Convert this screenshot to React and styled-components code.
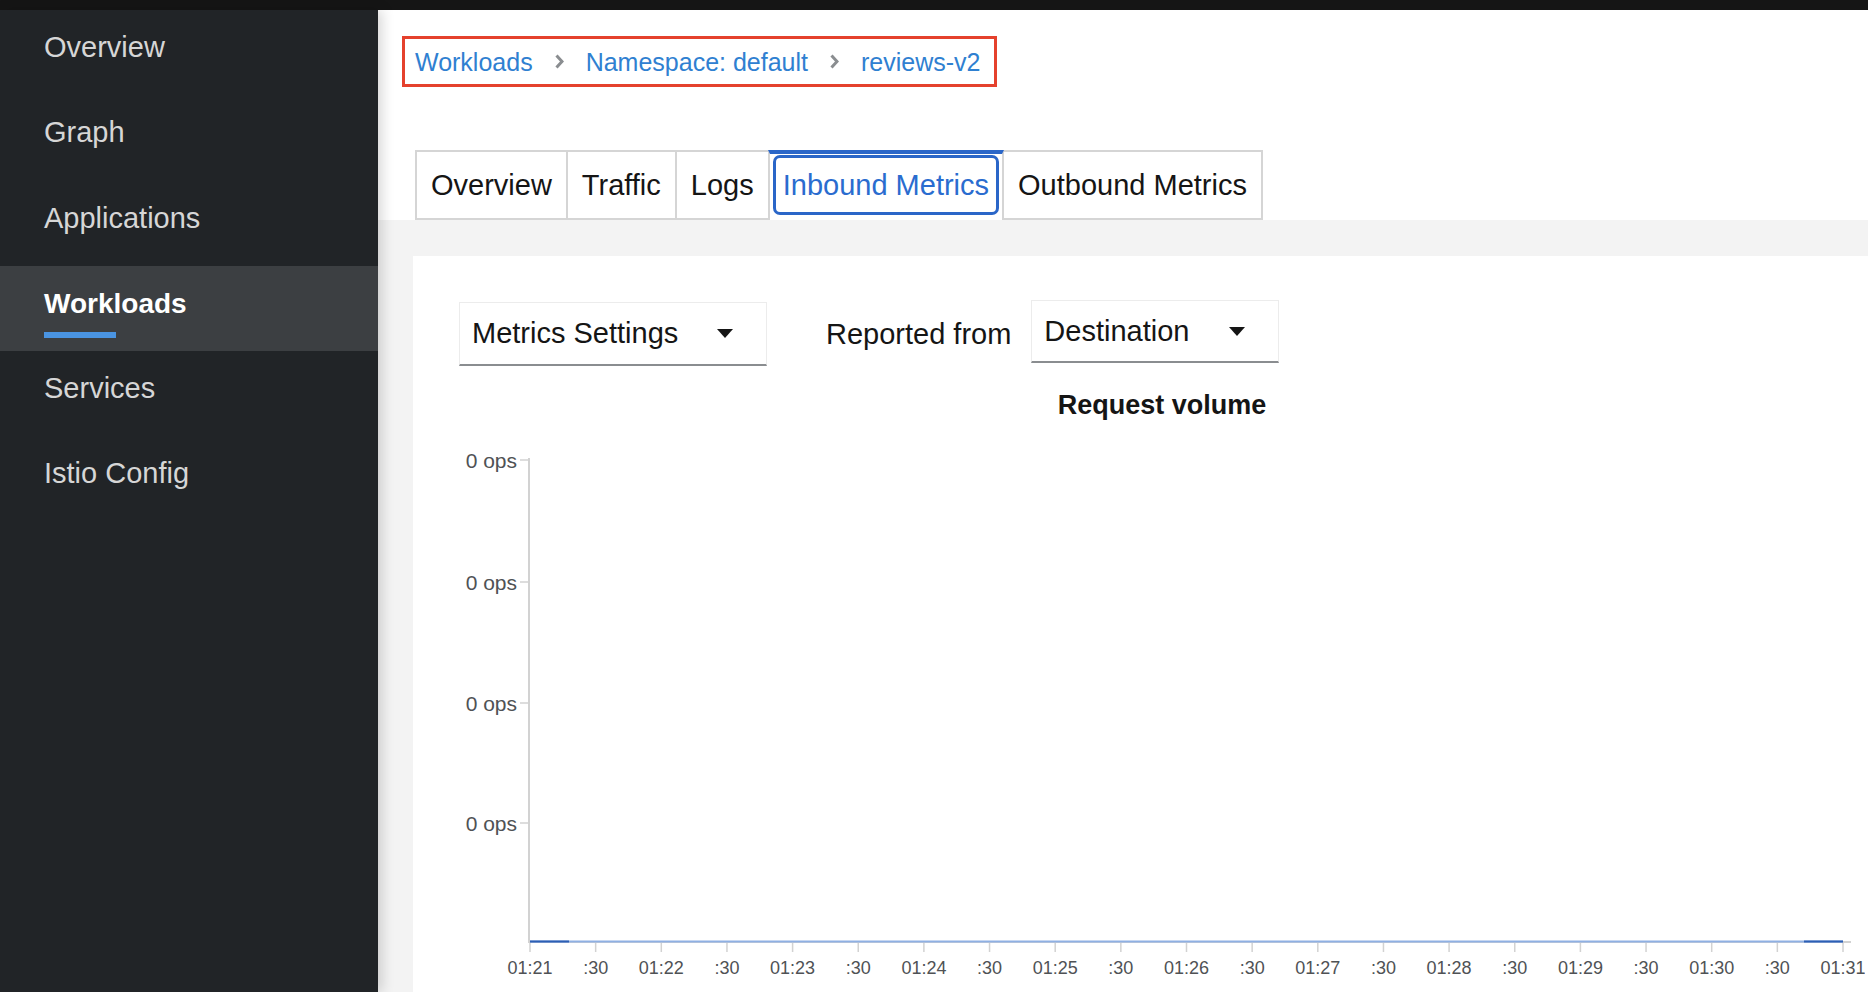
import React from 'react';
import styled, { createGlobalStyle } from 'styled-components';

const GlobalStyle = createGlobalStyle`
  html, body { margin: 0; padding: 0; height: 100%; overflow: hidden; }
  body { font-family: "Liberation Sans", Arial, sans-serif; background: #f3f3f3; }
  #root { height: 100%; }
  *, *::before, *::after { box-sizing: border-box; }
`;

const Page = styled.div`
  display: flex;
  flex-direction: column;
  width: 1868px;
  height: 992px;
  overflow: hidden;
`;

const TopBar = styled.div`
  height: 10px;
  flex: none;
  background: #151515;
`;

const Body = styled.div`
  display: flex;
  flex: 1;
  min-height: 0;
`;

const Sidebar = styled.nav`
  width: 378px;
  flex: none;
  background: #212427;
  position: relative;
  z-index: 1;
  box-shadow: 4px 0 12px rgba(0, 0, 0, 0.16);
`;

const NavList = styled.ul`
  list-style: none;
  margin: 0;
  padding: 0;
`;

const NavItem = styled.li`
  height: 85.3px;
  padding: 19px 0 0 44px;
  font-size: ${p => (p.$active ? 28 : 29)}px;
  line-height: 37px;
  background: ${p => (p.$active ? '#3c3f42' : 'transparent')};
  color: ${p => (p.$active ? '#ffffff' : '#d6d6d6')};
  font-weight: ${p => (p.$active ? 700 : 400)};
`;

const NavUnderline = styled.div`
  width: 72px;
  height: 6px;
  margin-top: 10px;
  background: #4a94e2;
`;

const Main = styled.main`
  flex: 1;
  min-width: 0;
  display: flex;
  flex-direction: column;
  background: #f3f3f3;
`;

const Header = styled.header`
  height: 210px;
  flex: none;
  background: #ffffff;
  display: flex;
  flex-direction: column;
  justify-content: space-between;
  padding: 26px 0 0 24px;
`;

const Breadcrumb = styled.ol`
  list-style: none;
  margin: 0;
  align-self: flex-start;
  display: flex;
  align-items: center;
  gap: 22px;
  height: 51px;
  padding: 0 14px 0 10px;
  border: 3px solid #e5412d;
`;

const Crumb = styled.li`
  font-size: 25px;
  line-height: 30px;
  color: #2f80d1;
`;

const Chevron = styled.li`
  display: flex;
  align-items: center;
  color: #8a8d90;
`;

const TabList = styled.div`
  display: flex;
  height: 70px;
  margin-left: 13px;
`;

const Tab = styled.div`
  height: 70px;
  display: flex;
  align-items: center;
  margin-left: -2px;
  padding: 0 14px;
  background: #ffffff;
  border: 2px solid #d5d5d5;
  font-size: 29px;
  color: #151515;
  white-space: nowrap;
  &:first-child { margin-left: 0; }
`;

const ActiveTab = styled(Tab)`
  position: relative;
  z-index: 1;
  padding: 0 3px 4px;
  border-top: 4px solid #2a66c8;
  border-bottom: none;
  color: #2a6ccf;
`;

const FocusRing = styled.span`
  display: flex;
  align-items: center;
  height: 60px;
  padding: 0 7px;
  border: 3px solid #2a66c8;
  border-radius: 7px;
`;

const Content = styled.div`
  flex: 1;
  min-height: 0;
  display: flex;
  padding: 36px 0 0 35px;
`;

const Card = styled.section`
  flex: 1;
  min-width: 0;
  background: #ffffff;
  display: flex;
  flex-direction: column;
  padding: 46px 3px 0 46px;
`;

const Toolbar = styled.div`
  display: flex;
  align-items: flex-start;
  height: 64px;
`;

const Dropdown = styled.button`
  width: ${p => p.$w}px;
  height: ${p => p.$h || 64}px;
  margin-top: ${p => p.$dy || 0}px;
  display: flex;
  align-items: center;
  justify-content: space-between;
  padding: 0 33px 0 12px;
  background: #ffffff;
  border: 1px solid #ececec;
  border-bottom: 2px solid #8a8d90;
  font-family: inherit;
  font-size: 29px;
  color: #151515;
  cursor: pointer;
`;

const ToolbarLabel = styled.span`
  line-height: 64px;
  font-size: 29px;
  color: #151515;
  margin: 0 20px 0 59px;
`;

const ChartTitle = styled.h2`
  margin: 23px 0 0;
  text-align: center;
  font-size: 27px;
  line-height: 32px;
  font-weight: 700;
  color: #151515;
`;

const ChartSvg = styled.svg`
  display: block;
  margin-top: 9px;
  flex: none;
`;

const Caret = () => (
  <svg width="16" height="9" viewBox="0 0 16 9" aria-hidden="true">
    <polygon points="0,0 16,0 8,9" fill="#151515" />
  </svg>
);

const ChevronIcon = () => (
  <svg width="9" height="15" viewBox="0 0 9 15" aria-hidden="true">
    <polyline points="1.5,1.5 7,7.5 1.5,13.5" fill="none" stroke="currentColor" strokeWidth="3" />
  </svg>
);

const navItems = ['Overview', 'Graph', 'Applications', 'Workloads', 'Services', 'Istio Config'];
const tabs = ['Overview', 'Traffic', 'Logs', 'Inbound Metrics', 'Outbound Metrics'];

const yTicks = [30, 152, 273, 393];
const xLabels = [];
for (let i = 0; i <= 20; i++) {
  const minute = 21 + Math.floor(i / 2);
  xLabels.push(i % 2 === 0 ? `01:${minute}` : ':30');
}

const Chart = () => {
  const x0 = 71;
  const step = 65.65;
  const axisY = 512;
  return (
    <ChartSvg width="1406" height="562" viewBox="0 0 1406 562">
      <line x1="70" y1="28" x2="70" y2={axisY + 1} stroke="#d2d2d2" strokeWidth="2" />
      {yTicks.map((y, i) => (
        <g key={i}>
          <line x1="61" y1={y} x2="70" y2={y} stroke="#d2d2d2" strokeWidth="1.5" />
          <text x="58" y={y} textAnchor="end" dominantBaseline="central" fontSize="21" fill="#4f5255" fontFamily="Liberation Sans, Arial, sans-serif">
            0 ops
          </text>
        </g>
      ))}
      <line x1="70" y1={axisY} x2="1392" y2={axisY} stroke="#d2d2d2" strokeWidth="2" />
      {xLabels.map((label, i) => {
        const x = x0 + i * step;
        return (
          <g key={i}>
            <line x1={x} y1={axisY} x2={x} y2={axisY + 10} stroke="#d2d2d2" strokeWidth="1.5" />
            <text x={x} y="538" textAnchor="middle" dominantBaseline="central" fontSize="18" fill="#4f5255" fontFamily="Liberation Sans, Arial, sans-serif">
              {label}
            </text>
          </g>
        );
      })}
      <line x1={x0} y1={axisY - 0.5} x2={x0 + 20 * step} y2={axisY - 0.5} stroke="#8fb0e3" strokeWidth="2" />
      <line x1={x0} y1={axisY - 0.5} x2={x0 + 39} y2={axisY - 0.5} stroke="#2c5fb5" strokeWidth="2" />
      <line x1={x0 + 20 * step - 39} y1={axisY - 0.5} x2={x0 + 20 * step} y2={axisY - 0.5} stroke="#2c5fb5" strokeWidth="2" />
    </ChartSvg>
  );
};

export default function App() {
  return (
    <>
      <GlobalStyle />
      <Page>
        <TopBar />
        <Body>
          <Sidebar>
            <NavList>
              {navItems.map(item => {
                const active = item === 'Workloads';
                return (
                  <NavItem key={item} $active={active}>
                    {item}
                    {active && <NavUnderline />}
                  </NavItem>
                );
              })}
            </NavList>
          </Sidebar>
          <Main>
            <Header>
              <Breadcrumb>
                <Crumb>Workloads</Crumb>
                <Chevron><ChevronIcon /></Chevron>
                <Crumb>Namespace: default</Crumb>
                <Chevron><ChevronIcon /></Chevron>
                <Crumb>reviews-v2</Crumb>
              </Breadcrumb>
              <TabList>
                {tabs.map(t =>
                  t === 'Inbound Metrics' ? (
                    <ActiveTab key={t}>
                      <FocusRing>{t}</FocusRing>
                    </ActiveTab>
                  ) : (
                    <Tab key={t}>{t}</Tab>
                  )
                )}
              </TabList>
            </Header>
            <Content>
              <Card>
                <Toolbar>
                  <Dropdown $w={308}>
                    <span>Metrics Settings</span>
                    <Caret />
                  </Dropdown>
                  <ToolbarLabel>Reported from</ToolbarLabel>
                  <Dropdown $w={248} $h={63} $dy={-2}>
                    <span>Destination</span>
                    <Caret />
                  </Dropdown>
                </Toolbar>
                <ChartTitle>Request volume</ChartTitle>
                <Chart />
              </Card>
            </Content>
          </Main>
        </Body>
      </Page>
    </>
  );
}
